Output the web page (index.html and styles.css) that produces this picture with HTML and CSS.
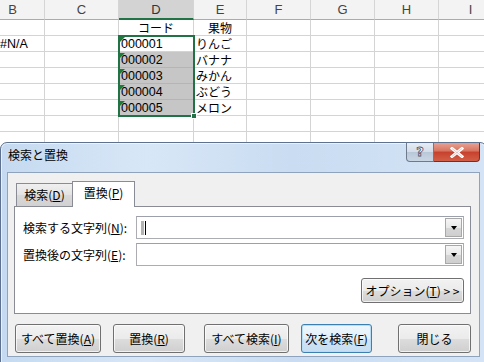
FILE: index.html
```html
<!DOCTYPE html>
<html lang="ja">
<head>
<meta charset="utf-8">
<link rel="stylesheet" href="styles.css">
</head>
<body>
<div class="sheet">
  <div class="grid">
    <div class="hd">B</div><div class="hd">C</div><div class="hd sel">D</div><div class="hd">E</div><div class="hd">F</div><div class="hd">G</div><div class="hd">H</div><div class="hd">I</div>

    <div class="c"></div><div class="c"></div><div class="c center">コード</div><div class="c center">果物</div><div class="c"></div><div class="c"></div><div class="c"></div><div class="c"></div>

    <div class="c na">#N/A</div><div class="c"></div><div class="c d err">000001</div><div class="c">りんご</div><div class="c"></div><div class="c"></div><div class="c"></div><div class="c"></div>

    <div class="c"></div><div class="c"></div><div class="c d err hl">000002</div><div class="c">バナナ</div><div class="c"></div><div class="c"></div><div class="c"></div><div class="c"></div>

    <div class="c"></div><div class="c"></div><div class="c d err hl">000003</div><div class="c">みかん</div><div class="c"></div><div class="c"></div><div class="c"></div><div class="c"></div>

    <div class="c"></div><div class="c"></div><div class="c d err hl">000004</div><div class="c">ぶどう</div><div class="c"></div><div class="c"></div><div class="c"></div><div class="c"></div>

    <div class="c"></div><div class="c"></div><div class="c d err hl">000005</div><div class="c">メロン</div><div class="c"></div><div class="c"></div><div class="c"></div><div class="c"></div>

    <div class="c"></div><div class="c"></div><div class="c"></div><div class="c"></div><div class="c"></div><div class="c"></div><div class="c"></div><div class="c"></div>

    <div class="c"></div><div class="c"></div><div class="c"></div><div class="c"></div><div class="c"></div><div class="c"></div><div class="c"></div><div class="c"></div>
  </div>
  <div class="selection"></div>
  <div class="handle"></div>
</div>

<div class="dialog">
  <div class="titlebar">
    <div class="title">検索と置換</div>
    <div class="ctrls">
      <div class="help">?</div>
      <div class="close">
        <svg width="14" height="11" viewBox="0 0 14 11"><path d="M2 1.5 L12 9.5 M12 1.5 L2 9.5" stroke="#fff" stroke-width="3" stroke-linecap="square" fill="none"/><path d="M2 1.5 L12 9.5 M12 1.5 L2 9.5" stroke="#5b1d17" stroke-width="0.6" fill="none" opacity="0.35"/></svg>
      </div>
    </div>
  </div>
  <div class="client">
    <div class="tabs">
      <div class="tab">検索(<u>D</u>)</div>
      <div class="tab active">置換(<u>P</u>)</div>
    </div>
    <div class="panel">
      <div class="form">
        <div class="label">検索する文字列(<u>N</u>):</div>
        <div class="combo"><div class="text"><span class="caret-bg"></span><span class="caret"></span></div><div class="drop"><span class="tri"></span></div></div>
        <div class="label">置換後の文字列(<u>E</u>):</div>
        <div class="combo"><div class="text"></div><div class="drop"><span class="tri"></span></div></div>
      </div>
      <div class="optrow"><div class="btn opt">オプション(<u>T</u>) &gt; &gt;</div></div>
    </div>
    <div class="buttons">
      <div class="btn b1">すべて置換(<u>A</u>)</div>
      <div class="btn b2">置換(<u>R</u>)</div>
      <div class="btn b3">すべて検索(<u>I</u>)</div>
      <div class="btn b4 def">次を検索(<u>F</u>)</div>
      <div class="btn b5">閉じる</div>
    </div>
  </div>
</div>
</body>
</html>
```

FILE: styles.css
```css
html, body {
  margin: 0;
  padding: 0;
  width: 484px;
  height: 362px;
  overflow: hidden;
  background: #fff;
}

body {
  position: relative;
  font-family: "Noto Sans CJK JP", "Noto Sans", sans-serif;
  font-size: 12px;
  color: #000;
}

.sheet {
  position: relative;
}

.grid {
  display: grid;
  grid-template-columns: 64px 74px 75px 53px 64px 64px 64px 64px;
  grid-template-rows: 20px repeat(8, 16px);
  margin-left: -19px;
  width: 522px;
}

.hd {
  box-sizing: border-box;
  background: #f3f3f3;
  border-right: 1px solid #d5d5d5;
  border-bottom: 1px solid #ababab;
  text-align: center;
  font-family: "Liberation Sans", "DejaVu Sans", sans-serif;
  font-size: 13px;
  line-height: 20px;
  color: #444;
}

.hd.sel {
  background: #d3d3d3;
  border-bottom: 2px solid #217346;
  color: #333;
  line-height: 19px;
}

.c {
  position: relative;
  box-sizing: border-box;
  border-right: 1px solid #d4d4d4;
  border-bottom: 1px solid #d4d4d4;
  font-size: 12px;
  line-height: 16px;
  padding-left: 2px;
  white-space: nowrap;
  overflow: visible;
}

.c.center {
  text-align: center;
  padding-left: 0;
}

.c.na {
  padding-left: 19px;
  font-family: "Liberation Sans", sans-serif;
  font-size: 12.5px;
}

.c.d {
  font-family: "Liberation Sans", sans-serif;
  font-size: 12.5px;
}

.c.hl {
  background: #c6c6c6;
  border-bottom-color: #b5b5b5;
}

.c.err::before {
  content: "";
  position: absolute;
  left: 1px;
  top: 1px;
  border-top: 5px solid #1f7a35;
  border-right: 5px solid transparent;
}

.selection {
  position: absolute;
  left: 118px;
  top: 35px;
  width: 77px;
  height: 82px;
  box-sizing: border-box;
  border: 2px solid #217346;
}

.handle {
  position: absolute;
  left: 191px;
  top: 113px;
  width: 6px;
  height: 6px;
  background: #217346;
  border: 1px solid #fff;
  box-sizing: border-box;
}

/* Dialog */
.dialog {
  position: absolute;
  left: 0;
  top: 142px;
  width: 487px;
  height: 230px;
  box-sizing: border-box;
  border: 1px solid #5e7190;
  border-radius: 7px 7px 0 0;
  background: linear-gradient(90deg, #c5daf0 0%, #d8e7f7 30%, #c9dcf1 60%, #d4e4f6 100%);
  box-shadow: inset 0 0 0 1px rgba(255,255,255,0.6);
}

.titlebar {
  height: 29px;
  display: flex;
  align-items: flex-start;
}

.title {
  padding: 3px 0 0 7px;
  font-size: 12px;
  line-height: 17px;
  color: #000;
}

.ctrls {
  margin-left: auto;
  margin-right: 6px;
  display: flex;
  height: 19px;
}

.help {
  width: 28px;
  box-sizing: border-box;
  border: 1px solid #6d7a8c;
  border-top: none;
  border-radius: 0 0 0 4px;
  background: linear-gradient(#e5ecf4, #d3dde9 50%, #b9c8d9 51%, #c9d6e4);
  text-align: center;
  font-family: "DejaVu Sans", sans-serif;
  font-weight: bold;
  font-size: 13px;
  line-height: 18px;
  color: #fff;
  -webkit-text-stroke: 0.8px #4a5566;
}

.close {
  width: 46px;
  box-sizing: border-box;
  border: 1px solid #7c2a22;
  border-left: none;
  border-top: none;
  border-radius: 0 0 4px 0;
  background: linear-gradient(#e6a293, #d8735f 45%, #c7412d 50%, #d25e47 100%);
  display: flex;
  align-items: center;
  justify-content: center;
}

.client {
  margin: 0 6px 0 6px;
  height: 185px;
  box-sizing: border-box;
  border: 1px solid #90a3bc;
  background: #f0f0f0;
  padding: 8px 0 0 6px;
}

.tabs {
  display: flex;
  align-items: flex-end;
  height: 25px;
  margin-left: 2px;
}

.tab {
  box-sizing: border-box;
  height: 23px;
  width: 57px;
  border: 1px solid #898c95;
  border-bottom: none;
  background: linear-gradient(#f0f0f0, #e3e3e3 50%, #d9d9d9 51%, #d1d1d1);
  text-align: center;
  line-height: 21px;
}

.tab.active {
  position: relative;
  z-index: 1;
  height: 26px;
  width: 63px;
  margin-left: -1px;
  margin-bottom: -1px;
  background: #fff;
  line-height: 22px;
}

.panel {
  width: 457px;
  height: 108px;
  box-sizing: border-box;
  border: 1px solid #898c95;
  background: #fff;
  padding: 9px 6px 0 8px;
}

.form {
  display: grid;
  grid-template-columns: 113px 328px;
  row-gap: 4px;
  align-items: center;
}

.label {
  line-height: 16px;
}

.combo {
  height: 23px;
  box-sizing: border-box;
  border: 1px solid #abadb3;
  border-top-color: #9da0aa;
  display: flex;
  background: #fff;
}

.combo .text {
  flex: 1;
  display: flex;
  align-items: center;
  padding-left: 4px;
}

.caret-bg {
  display: block;
  width: 3px;
  height: 14px;
  background: #b4b4b4;
}

.caret {
  display: block;
  width: 1px;
  height: 14px;
  background: #000;
  margin-left: 1px;
}

.drop {
  width: 17px;
  margin: 1px;
  box-sizing: border-box;
  border: 1px solid #a8a8a8;
  background: linear-gradient(#f6f6f6, #e8e8e8 50%, #d6d6d6 51%, #cfcfcf);
  display: flex;
  align-items: center;
  justify-content: center;
}

.tri {
  display: block;
  width: 0;
  height: 0;
  border-left: 3.5px solid transparent;
  border-right: 3.5px solid transparent;
  border-top: 4px solid #000;
}

.optrow {
  display: flex;
  justify-content: flex-end;
  margin-top: 12px;
}

.btn {
  box-sizing: border-box;
  height: 25px;
  border: 1px solid #707070;
  border-radius: 3px;
  background: linear-gradient(#f2f2f2, #ebebeb 50%, #dddddd 51%, #cfcfcf);
  box-shadow: inset 0 0 0 1px rgba(255,255,255,0.7);
  display: flex;
  align-items: center;
  justify-content: center;
  white-space: nowrap;
}

.opt {
  width: 103px;
}

.buttons {
  display: flex;
  margin-top: 10px;
  margin-left: 1px;
}

.buttons .btn {
  height: 29px;
}

.b1 { width: 86px; }
.b2 { width: 72px; margin-left: 12px; }
.b3 { width: 85px; margin-left: 19px; }
.b4 { width: 71px; margin-left: 12px; }
.b5 { width: 73px; margin-left: 26px; }

.btn.def {
  border-color: #3c7fb1;
  background: linear-gradient(#eef6fc, #e2eff9 50%, #cfe4f4 51%, #c6def2);
  box-shadow: inset 0 0 0 1px #b7dcf3;
}
```
